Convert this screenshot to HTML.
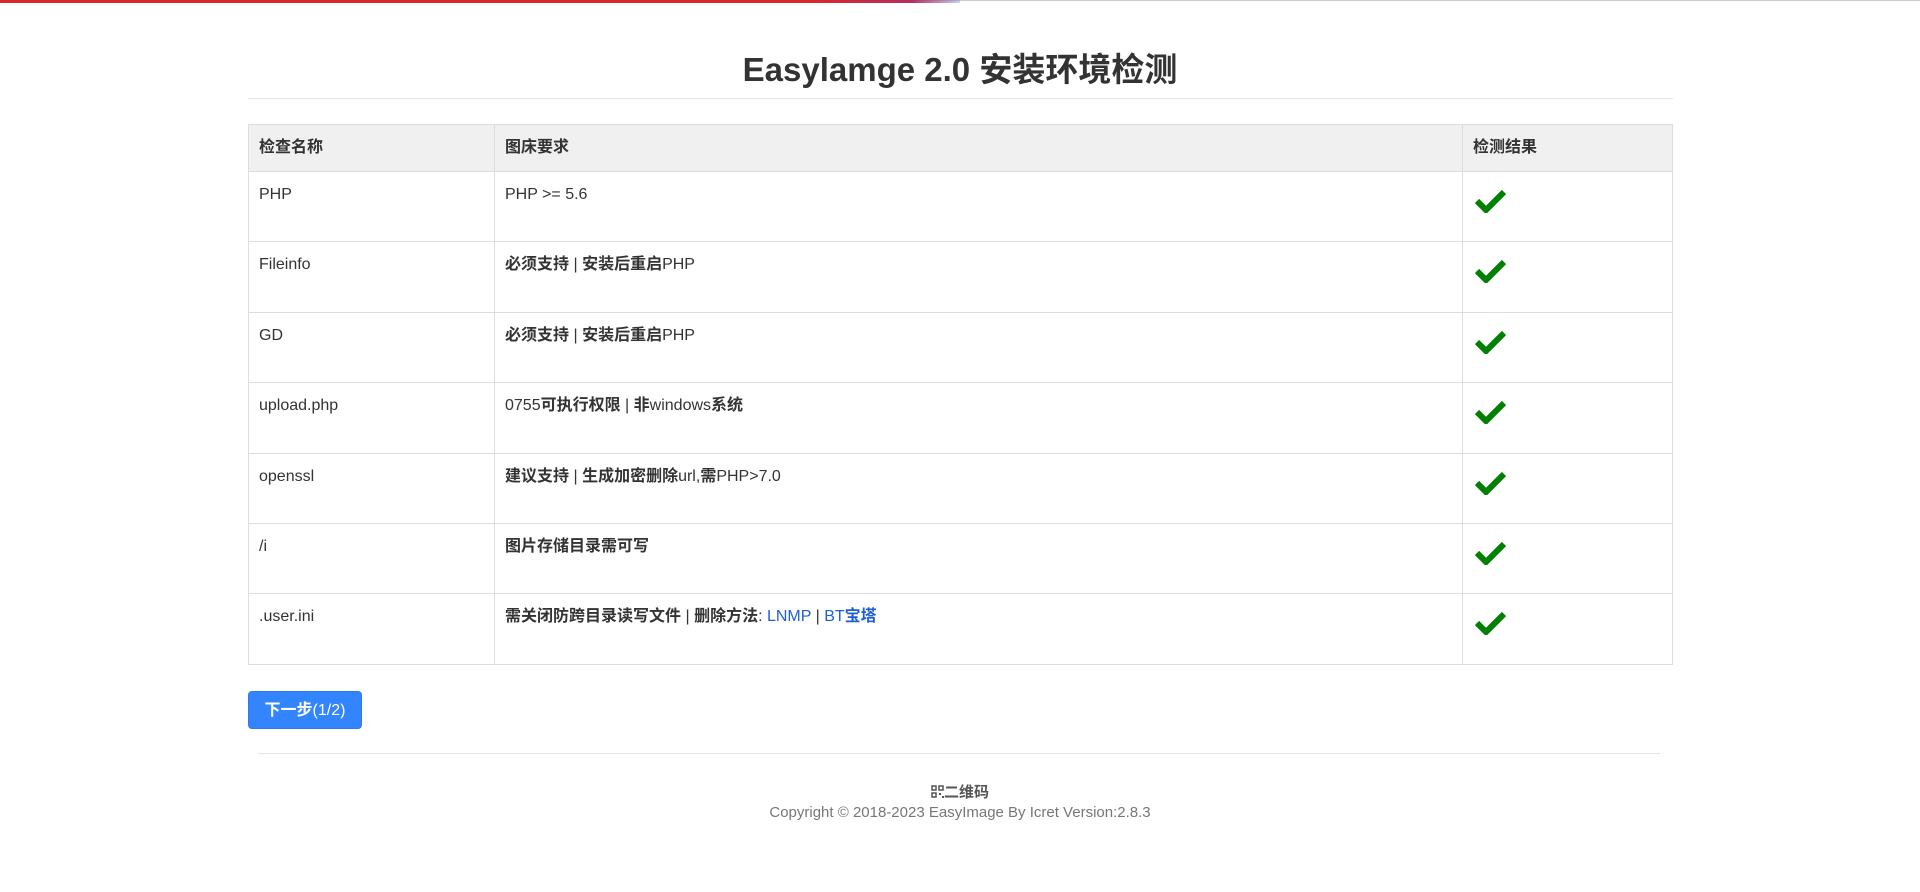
<!DOCTYPE html>
<html><head><meta charset="utf-8"><style>
body{margin:0;background:#fff;font-family:"Liberation Sans","Noto Sans CJK SC",sans-serif;color:#333;width:1920px;height:892px;position:relative;overflow:hidden}
.topg{position:absolute;left:0;top:0;width:1920px;height:1px;background:#ccc}
.topr{position:absolute;left:0;top:0;width:960px;height:3px;background:linear-gradient(90deg,#d9272e 0%,#d9272e 85%,#b03060 95%,rgba(120,140,220,0.4) 100%)}
h1{position:absolute;left:0;width:1920px;top:49px;margin:0;text-align:center;font-size:33px;font-weight:bold;line-height:42px;color:#333}
.hr1{position:absolute;left:248px;width:1425px;top:98px;height:1px;background:#e5e5e5}
table{position:absolute;left:248px;top:124px;width:1425px;border-collapse:collapse;font-size:16px}
td,th{border:1px solid #ddd;padding:13px 10px;text-align:left;vertical-align:top;line-height:20px}
th{background:#f0f0f0;font-weight:bold;height:19px;padding:13px 10px 13px}
tr.r td{height:43.4px}
b{font-weight:bold}
a{color:#1f5fd1;text-decoration:none}
.btn{position:absolute;left:248px;top:691px;width:114px;height:38px;background:#3385ff;border-radius:4px;color:#fff;font-size:16px;line-height:38px;text-align:center;border:1px solid #2f7ae8;box-sizing:border-box}
.hr2{position:absolute;left:258px;width:1402px;top:753px;height:1px;background:#e5e5e5}
.qr{position:absolute;left:0;width:1920px;top:781px;text-align:center;font-size:15px;font-weight:bold;color:#555}
.cp{position:absolute;left:0;width:1920px;top:804px;text-align:center;font-size:15px;color:#777}
</style></head><body>
<div class="topg"></div><div class="topr"></div>
<h1>Easylamge 2.0 安装环境检测</h1>
<div class="hr1"></div>
<table>
<colgroup><col style="width:246px"><col style="width:968px"><col></colgroup>
<tr><th>检查名称</th><th>图床要求</th><th>检测结果</th></tr>
<tr class="r"><td>PHP</td><td>PHP &gt;= 5.6</td><td>CHK</td></tr>
<tr class="r"><td>Fileinfo</td><td><b>必须支持</b> | <b>安装后重启</b>PHP</td><td>CHK</td></tr>
<tr class="r"><td>GD</td><td><b>必须支持</b> | <b>安装后重启</b>PHP</td><td>CHK</td></tr>
<tr class="r"><td>upload.php</td><td>0755<b>可执行权限</b> | <b>非</b>windows<b>系统</b></td><td>CHK</td></tr>
<tr class="r"><td>openssl</td><td><b>建议支持</b> | <b>生成加密删除</b>url,<b>需</b>PHP&gt;7.0</td><td>CHK</td></tr>
<tr class="r"><td>/i</td><td><b>图片存储目录需可写</b></td><td>CHK</td></tr>
<tr class="r"><td>.user.ini</td><td><b>需关闭防跨目录读写文件</b> | <b>删除方法</b>: <a>LNMP</a> | <a>BT<b>宝塔</b></a></td><td>CHK</td></tr>
</table>
<div class="btn"><b>下一步</b>(1/2)</div>
<div class="hr2"></div>
<div class="qr"><svg width="13" height="13" viewBox="0 0 13 13" style="vertical-align:-1px"><g fill="none" stroke="#555" stroke-width="1.5"><rect x="1" y="1" width="4" height="4"/><rect x="8" y="1" width="4" height="4"/><rect x="1" y="8" width="4" height="4"/></g><rect x="8" y="8" width="2" height="2" fill="#555"/><rect x="11" y="11" width="2" height="2" fill="#555"/></svg>二维码</div>
<div class="cp">Copyright © 2018-2023 EasyImage By Icret Version:2.8.3</div>
<script>
document.querySelectorAll('td').forEach(function(t){if(t.textContent==='CHK'){t.innerHTML='<svg width="31" height="25" viewBox="0 0 31 25" style="margin-top:3px;margin-left:2px"><path d="M2 13 L11 22 L29 4" fill="none" stroke="#008000" stroke-width="6" stroke-linejoin="miter"/></svg>';}});
</script>
</body></html>
